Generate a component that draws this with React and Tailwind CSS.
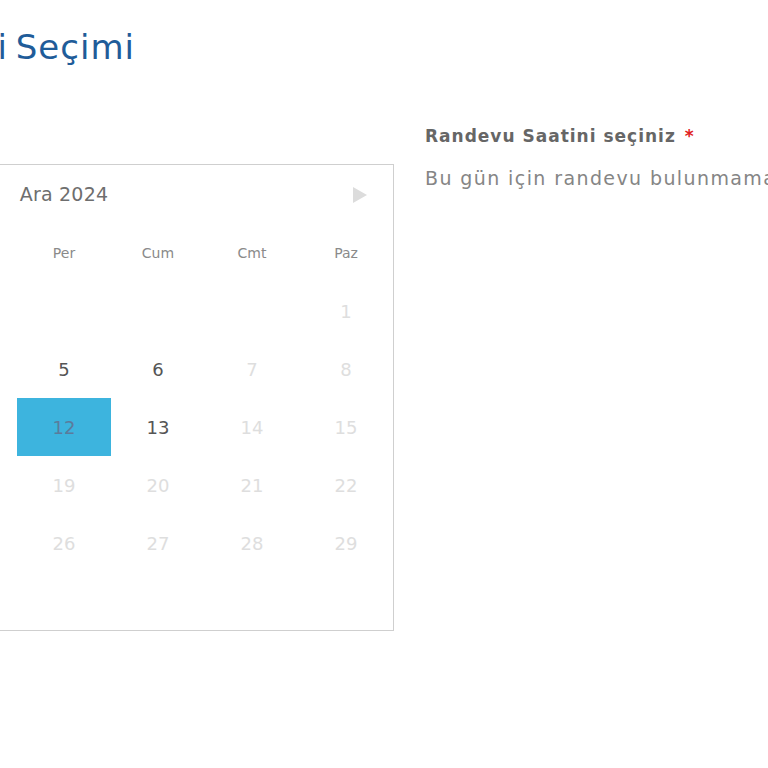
import React from "react";

const F = { fontFamily: '"DejaVu Sans", "Noto Sans", sans-serif' };

function Triangle() {
  return (
    <svg width="15" height="16" viewBox="0 0 15 16">
      <polygon points="1,0 15,8 1,16" fill="#dcdcdc" />
    </svg>
  );
}

const rows = [
  [null, null, null, null, null, null, { d: 1 }],
  [{ d: 2 }, { d: 3 }, { d: 4 }, { d: 5, on: true }, { d: 6, on: true }, { d: 7 }, { d: 8 }],
  [{ d: 9 }, { d: 10 }, { d: 11 }, { d: 12, sel: true }, { d: 13, on: true }, { d: 14 }, { d: 15 }],
  [{ d: 16 }, { d: 17 }, { d: 18 }, { d: 19 }, { d: 20 }, { d: 21 }, { d: 22 }],
  [{ d: 23 }, { d: 24 }, { d: 25 }, { d: 26 }, { d: 27 }, { d: 28 }, { d: 29 }],
  [{ d: 30 }, { d: 31 }, null, null, null, null, null],
];

const heads = ["Pzt", "Sal", "Çar", "Per", "Cum", "Cmt", "Paz"];

function Cell({ c }) {
  if (!c) return <div className="h-[58px]" />;
  let cls = "text-[#dedede]";
  if (c.on) cls = "text-[#555555]";
  if (c.sel) cls = "bg-[#3db4de] text-[#5b7b9c]";
  return (
    <div className={`h-[58px] flex items-center justify-center text-[18px] ${cls}`}>
      {c.d}
    </div>
  );
}

export default function App() {
  return (
    <div className="w-[768px] h-[768px] overflow-hidden bg-white relative" style={F}>
      <div className="ml-[-266px]">
        <div className="flex w-[401px] justify-end pt-[27px]">
          <h1 className="whitespace-nowrap text-[34px] leading-[40px] text-[#1f5c99] tracking-[1px] [word-spacing:-4px]">
            Randevu Tarihi Seçimi
          </h1>
        </div>
        <div className="flex mt-[97px] gap-[31px]">
          <div className="w-[660px] h-[467px] border border-[#cfcfcf] shrink-0">
            <div className="h-[59px] flex items-center justify-between px-[26px]">
              <span className="w-[15px]" />
              <span className="text-[19px] text-[#6e6e6e] tracking-[0.2px]">Ara 2024</span>
              <Triangle />
            </div>
            <div className="grid grid-cols-7">
              {heads.map((h) => (
                <div key={h} className="h-[58px] flex items-center justify-center text-[14px] text-[#8a8a8a]">
                  {h}
                </div>
              ))}
              {rows.flat().map((c, i) => (
                <Cell key={i} c={c} />
              ))}
            </div>
          </div>
          <div className="mt-[-40px] whitespace-nowrap">
            <div className="text-[17px] font-bold text-[#666666] leading-[24px] tracking-[1px]">
              Randevu Saatini seçiniz <span className="text-[#e02020] ml-[2px]">*</span>
            </div>
            <div className="mt-[18px] text-[19px] text-[#858585] leading-[24px] tracking-[1.4px]">
              Bu gün için randevu bulunmamaktadır.
            </div>
          </div>
        </div>
      </div>
    </div>
  );
}
